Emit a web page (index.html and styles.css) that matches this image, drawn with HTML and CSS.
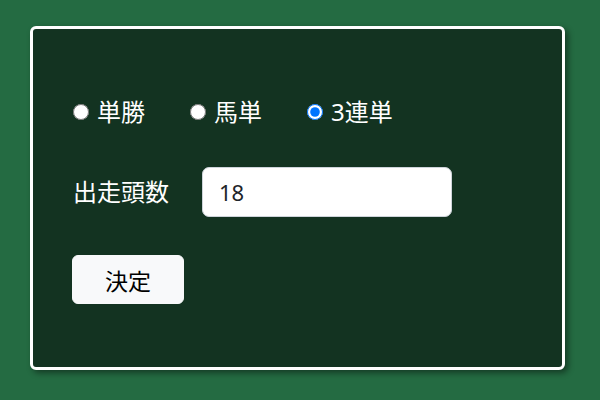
FILE: index.html
```html
<!DOCTYPE html>
<html lang="ja">
<head>
<meta charset="utf-8">
<title>馬券</title>
<link rel="stylesheet" href="styles.css">
</head>
<body>
<div class="panel">
  <div class="bet-types">
    <label class="bet-type"><input type="radio" name="type" class="radio"> 単勝</label>
    <label class="bet-type"><input type="radio" name="type" class="radio"> 馬単</label>
    <label class="bet-type"><input type="radio" name="type" class="radio" checked> 3連単</label>
  </div>
  <div class="field-row">
    <label class="field-label" for="count">出走頭数</label>
    <input id="count" class="field-input" type="text" value="18">
  </div>
  <div class="actions">
    <button class="submit" type="button">決定</button>
  </div>
</div>
</body>
</html>
```

FILE: styles.css
```css
html, body {
  margin: 0;
  padding: 0;
}
body {
  background: #246b42;
  width: 600px;
  height: 400px;
  padding: 26px 0 0 30px;
  box-sizing: border-box;
  font-family: "Noto Sans", "Noto Sans CJK JP", sans-serif;
}
.panel {
  width: 535px;
  height: 344px;
  box-sizing: border-box;
  background: #133321;
  border: 3px solid #ffffff;
  border-radius: 6px;
  box-shadow: 3px 3px 6px rgba(0, 0, 0, 0.45);
  padding: 65px 0 0 39px;
  display: flex;
  flex-direction: column;
  align-items: flex-start;
}
.bet-types {
  display: flex;
  align-items: center;
  height: 36px;
}
.bet-type {
  display: inline-flex;
  align-items: center;
  gap: 8px;
  margin-right: 44px;
  color: #ffffff;
  font-size: 24px;
  line-height: 36px;
  white-space: nowrap;
}
.radio {
  width: 16px;
  height: 16px;
  margin: 0 0 0 1px;
}
.field-row {
  display: flex;
  align-items: center;
  margin-top: 37px;
}
.field-label {
  color: #ffffff;
  font-size: 24px;
  line-height: 36px;
  margin-left: 1px;
  width: 129px;
}
.field-input {
  width: 250px;
  height: 50px;
  box-sizing: border-box;
  border: 1px solid #ced4da;
  border-radius: 7px;
  padding: 0 16px;
  font-family: "Noto Sans", "Noto Sans CJK JP", sans-serif;
  font-size: 22px;
  color: #212529;
  background: #ffffff;
  outline: none;
}
.actions {
  margin-top: 38px;
}
.submit {
  width: 112px;
  height: 49px;
  box-sizing: border-box;
  background: #f8f9fa;
  border: 1px solid #f8f9fa;
  border-radius: 6px;
  font-family: "Noto Sans", "Noto Sans CJK JP", sans-serif;
  font-size: 23px;
  color: #000000;
  padding: 0;
}
```
